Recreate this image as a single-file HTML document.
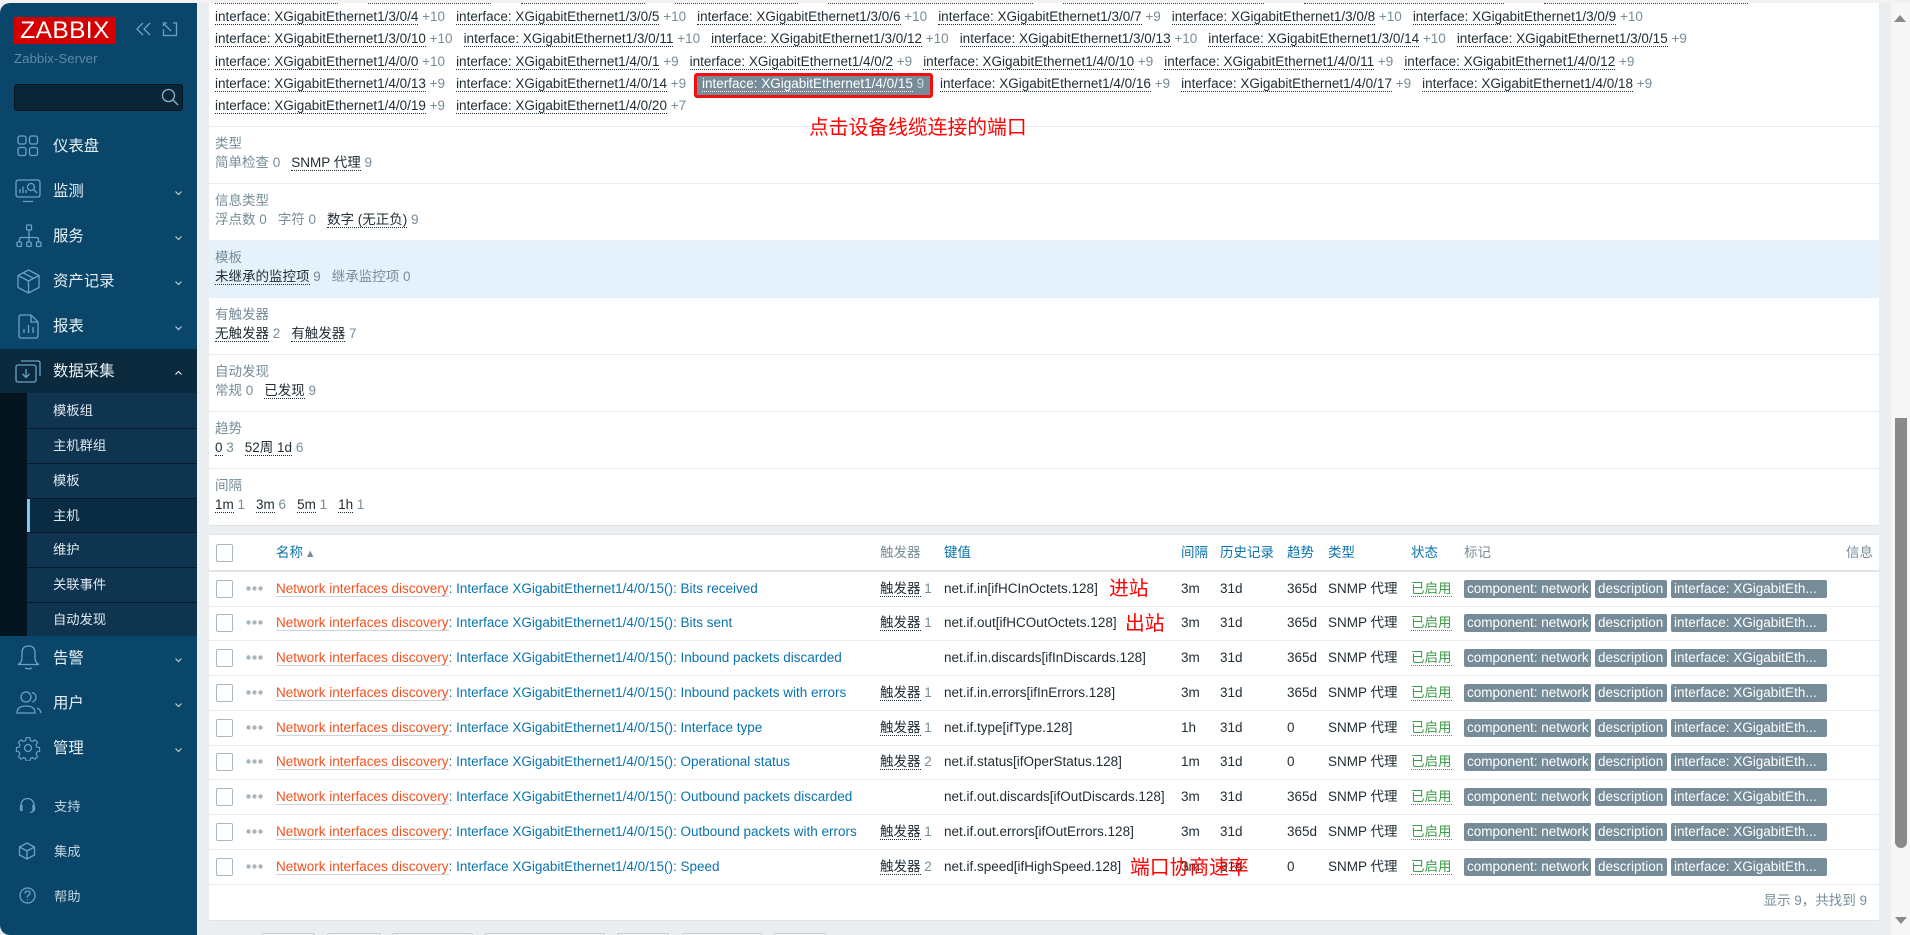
<!DOCTYPE html>
<html lang="zh"><head><meta charset="utf-8"><title>Zabbix</title>
<style>
html,body{margin:0;padding:0;width:1910px;height:935px;overflow:hidden;background:#ebeef0}
body{font:13.5px/16px "Liberation Sans","Noto Sans CJK SC",sans-serif;color:#1f2c33;position:relative}
a{color:inherit;text-decoration:none}
.abs{position:absolute}
#top{position:absolute;left:0;top:0;width:1910px;height:3px;background:#f2f2f2}
#side{position:absolute;left:0;top:3px;width:197px;height:932px;background:#0a466a;border-radius:10px 0 0 10px;overflow:hidden;color:#e4edf2}
#side .m{position:absolute;left:53px;font-size:15.4px;line-height:20px;color:#e8f0f4;white-space:nowrap;margin-top:1px}
#side .s{position:absolute;left:53px;font-size:13.3px;line-height:20px;color:#dfe8ee;white-space:nowrap;margin-top:1px}
#side .b{position:absolute;left:54px;font-size:13.3px;line-height:20px;color:#c0d2dd;white-space:nowrap;margin-top:1px}
#side svg{position:absolute;fill:none;stroke:#6aa2c6;stroke-width:1.3}
#side svg.c{stroke:#b9ccd8;stroke-width:1.6;left:174px;width:9px;height:6px;margin-top:-1px}
.panel{position:absolute;left:209px;width:1670px;background:#fff}
.tl{position:absolute;left:215px;white-space:nowrap;line-height:18px;height:18px}
.tl a,.v a{border-bottom:1px dotted #1f2c33;color:#1f2c33;padding-bottom:0}
.tl i,.v i{font-style:normal;color:#768d99}
.tl span{margin-right:11px}
.lab{position:absolute;left:215px;color:#768d99;line-height:18px;white-space:nowrap;margin-top:1px}
.v{position:absolute;left:215px;line-height:18px;white-space:nowrap;color:#768d99}
.v span{margin-right:11px}
.sep{position:absolute;left:209px;width:1670px;height:1px;background:#ebeef0}
.r{position:absolute;left:209px;width:1670px;height:34px;border-bottom:1px solid #ebeef0;box-sizing:content-box;line-height:33px;white-space:nowrap}
.r>*{position:absolute}
.cb{left:7px;top:8px;width:15px;height:16px;border:1px solid #a8b7c1;border-radius:2px;background:#fff}
.dots{left:37px;top:14px;width:17px;height:5px}
.n{left:67px;color:#0a73ad}
.n a{color:#f4511e;border-bottom:1px solid #cdd5da}
.g{left:671px;color:#768d99}.g a{color:#1f2c33;border-bottom:1px dotted #1f2c33}
.k{left:735px}.iv{left:972px}.h{left:1011px}.tr{left:1078px}.ty{left:1119px}
.st{left:1202px;color:#3d9d47}.st a{border-bottom:1px dotted #3d9d47}
.tag{top:8px;height:18px;line-height:17px;background:#768d99;color:#fff;border-radius:2px;padding:0 3px;box-sizing:border-box;overflow:hidden}
.t1{left:1255px;width:127px}.t2{left:1386px;width:72px}.t3{left:1462px;width:156px}
.hd{position:absolute;top:545px;line-height:16px;white-space:nowrap;color:#0a73ad}
.red{position:absolute;color:#f00;font-size:19.8px;line-height:26px;white-space:nowrap}
.btn{position:absolute;top:933px;height:6px;border:1px solid #c5ced4;border-radius:2px;background:#f4f6f7;box-sizing:border-box}
.d{position:absolute;top:3px;height:1px;border-top:1px dotted #39454c}
</style></head><body>
<div id="top"></div>

<!-- filter panel -->
<div class="panel" style="top:3px;height:522px"></div>
<div class="d" style="left:215px;width:123px"></div><div class="d" style="left:368px;width:123px"></div><div class="d" style="left:521px;width:124px"></div><div class="d" style="left:675px;width:123px"></div><div class="d" style="left:828px;width:205px"></div><div class="d" style="left:1063px;width:201px"></div><div class="d" style="left:1304px;width:200px"></div><div class="d" style="left:1544px;width:204px"></div>
<div class="abs" style="left:209px;top:240px;width:1670px;height:57px;background:#e5f2fc"></div>
<div class="sep" style="top:126px"></div><div class="sep" style="top:183px"></div><div class="sep" style="top:240px"></div><div class="sep" style="top:297px"></div><div class="sep" style="top:354px"></div><div class="sep" style="top:411px"></div><div class="sep" style="top:468px"></div>
<div class="sep" style="top:525px;background:#dfe4e7"></div>

<div class="tl" style="top:8px"><span><a>interface: XGigabitEthernet1/3/0/4</a> <i>+10</i></span><span><a>interface: XGigabitEthernet1/3/0/5</a> <i>+10</i></span><span><a>interface: XGigabitEthernet1/3/0/6</a> <i>+10</i></span><span><a>interface: XGigabitEthernet1/3/0/7</a> <i>+9</i></span><span><a>interface: XGigabitEthernet1/3/0/8</a> <i>+10</i></span><span><a>interface: XGigabitEthernet1/3/0/9</a> <i>+10</i></span></div>
<div class="tl" style="top:30px"><span><a>interface: XGigabitEthernet1/3/0/10</a> <i>+10</i></span><span><a>interface: XGigabitEthernet1/3/0/11</a> <i>+10</i></span><span><a>interface: XGigabitEthernet1/3/0/12</a> <i>+10</i></span><span><a>interface: XGigabitEthernet1/3/0/13</a> <i>+10</i></span><span><a>interface: XGigabitEthernet1/3/0/14</a> <i>+10</i></span><span><a>interface: XGigabitEthernet1/3/0/15</a> <i>+9</i></span></div>
<div class="tl" style="top:53px"><span><a>interface: XGigabitEthernet1/4/0/0</a> <i>+10</i></span><span><a>interface: XGigabitEthernet1/4/0/1</a> <i>+9</i></span><span><a>interface: XGigabitEthernet1/4/0/2</a> <i>+9</i></span><span><a>interface: XGigabitEthernet1/4/0/10</a> <i>+9</i></span><span><a>interface: XGigabitEthernet1/4/0/11</a> <i>+9</i></span><span><a>interface: XGigabitEthernet1/4/0/12</a> <i>+9</i></span></div>
<div class="tl" style="top:75px"><span><a>interface: XGigabitEthernet1/4/0/13</a> <i>+9</i></span><span><a>interface: XGigabitEthernet1/4/0/14</a> <i>+9</i></span></div>
<div class="abs" style="left:694px;top:73px;width:239px;height:25px;border:3px solid #f01010;border-radius:3px;box-sizing:border-box;background:#fff"></div>
<div class="abs" style="left:697px;top:76px;width:233px;height:19px;background:#768d99"></div>
<div class="tl" style="top:75px;left:702px;color:#fff"><a style="color:#fff;border-bottom:1px dotted #fff">interface: XGigabitEthernet1/4/0/15</a> <i style="color:#cfd8dd">9</i></div>
<div class="tl" style="top:75px;left:940px"><span><a>interface: XGigabitEthernet1/4/0/16</a> <i>+9</i></span><span><a>interface: XGigabitEthernet1/4/0/17</a> <i>+9</i></span><span><a>interface: XGigabitEthernet1/4/0/18</a> <i>+9</i></span></div>
<div class="tl" style="top:97px"><span><a>interface: XGigabitEthernet1/4/0/19</a> <i>+9</i></span><span><a>interface: XGigabitEthernet1/4/0/20</a> <i>+7</i></span></div>
<div class="red" style="left:809px;top:115px">点击设备线缆连接的端口</div>

<div class="lab" style="top:134px">类型</div>
<div class="v" style="top:154px"><span>简单检查 0</span><span><a>SNMP 代理</a> 9</span></div>
<div class="lab" style="top:191px">信息类型</div>
<div class="v" style="top:211px"><span>浮点数 0</span><span>字符 0</span><span><a>数字 (无正负)</a> 9</span></div>
<div class="lab" style="top:248px">模板</div>
<div class="v" style="top:268px"><span><a>未继承的监控项</a> 9</span><span>继承监控项 0</span></div>
<div class="lab" style="top:305px">有触发器</div>
<div class="v" style="top:325px"><span><a>无触发器</a> 2</span><span><a>有触发器</a> 7</span></div>
<div class="lab" style="top:362px">自动发现</div>
<div class="v" style="top:382px"><span>常规 0</span><span><a>已发现</a> 9</span></div>
<div class="lab" style="top:419px">趋势</div>
<div class="v" style="top:439px"><span><a>0</a> 3</span><span><a>52周 1d</a> 6</span></div>
<div class="lab" style="top:476px">间隔</div>
<div class="v" style="top:496px"><span><a>1m</a> 1</span><span><a>3m</a> 6</span><span><a>5m</a> 1</span><span><a>1h</a> 1</span></div>

<!-- table panel -->
<div class="panel" style="top:535px;height:385px"></div>
<div class="sep" style="top:534px;background:#e2e6e9"></div>
<div class="sep" style="top:920px;background:#dfe4e7"></div>
<div class="abs" style="left:209px;top:570px;width:1670px;height:2px;background:#dfe4e7"></div>
<div class="abs" style="left:216px;top:544px;width:15px;height:16px;border:1px solid #a8b7c1;border-radius:2px"></div>
<div class="hd" style="left:276px">名称 <span style="font-size:11px;color:#768d99;margin-left:-2px">▲</span></div>
<div class="hd" style="left:880px;color:#768d99">触发器</div>
<div class="hd" style="left:944px">键值</div>
<div class="hd" style="left:1181px">间隔</div>
<div class="hd" style="left:1220px">历史记录</div>
<div class="hd" style="left:1287px">趋势</div>
<div class="hd" style="left:1328px">类型</div>
<div class="hd" style="left:1411px">状态</div>
<div class="hd" style="left:1464px;color:#768d99">标记</div>
<div class="hd" style="left:1846px;color:#768d99">信息</div>

<div class="r" style="top:572px"><div class="cb"></div><svg class="dots" viewBox="0 0 17 5"><g fill="#a9b5bd"><circle cx="2.5" cy="2.5" r="2.2"/><circle cx="8.5" cy="2.5" r="2.2"/><circle cx="14.5" cy="2.5" r="2.2"/></g></svg><div class="n"><a>Network interfaces discovery</a>: Interface XGigabitEthernet1/4/0/15(): Bits received</div><div class="g"><a>触发器</a> 1</div><div class="k">net.if.in[ifHCInOctets.128]</div><div class="iv">3m</div><div class="h">31d</div><div class="tr">365d</div><div class="ty">SNMP 代理</div><div class="st"><a>已启用</a></div><div class="tag t1">component: network</div><div class="tag t2">description</div><div class="tag t3">interface: XGigabitEth...</div></div>
<div class="r" style="top:606px"><div class="cb"></div><svg class="dots" viewBox="0 0 17 5"><g fill="#a9b5bd"><circle cx="2.5" cy="2.5" r="2.2"/><circle cx="8.5" cy="2.5" r="2.2"/><circle cx="14.5" cy="2.5" r="2.2"/></g></svg><div class="n"><a>Network interfaces discovery</a>: Interface XGigabitEthernet1/4/0/15(): Bits sent</div><div class="g"><a>触发器</a> 1</div><div class="k">net.if.out[ifHCOutOctets.128]</div><div class="iv">3m</div><div class="h">31d</div><div class="tr">365d</div><div class="ty">SNMP 代理</div><div class="st"><a>已启用</a></div><div class="tag t1">component: network</div><div class="tag t2">description</div><div class="tag t3">interface: XGigabitEth...</div></div>
<div class="r" style="top:641px"><div class="cb"></div><svg class="dots" viewBox="0 0 17 5"><g fill="#a9b5bd"><circle cx="2.5" cy="2.5" r="2.2"/><circle cx="8.5" cy="2.5" r="2.2"/><circle cx="14.5" cy="2.5" r="2.2"/></g></svg><div class="n"><a>Network interfaces discovery</a>: Interface XGigabitEthernet1/4/0/15(): Inbound packets discarded</div><div class="k">net.if.in.discards[ifInDiscards.128]</div><div class="iv">3m</div><div class="h">31d</div><div class="tr">365d</div><div class="ty">SNMP 代理</div><div class="st"><a>已启用</a></div><div class="tag t1">component: network</div><div class="tag t2">description</div><div class="tag t3">interface: XGigabitEth...</div></div>
<div class="r" style="top:676px"><div class="cb"></div><svg class="dots" viewBox="0 0 17 5"><g fill="#a9b5bd"><circle cx="2.5" cy="2.5" r="2.2"/><circle cx="8.5" cy="2.5" r="2.2"/><circle cx="14.5" cy="2.5" r="2.2"/></g></svg><div class="n"><a>Network interfaces discovery</a>: Interface XGigabitEthernet1/4/0/15(): Inbound packets with errors</div><div class="g"><a>触发器</a> 1</div><div class="k">net.if.in.errors[ifInErrors.128]</div><div class="iv">3m</div><div class="h">31d</div><div class="tr">365d</div><div class="ty">SNMP 代理</div><div class="st"><a>已启用</a></div><div class="tag t1">component: network</div><div class="tag t2">description</div><div class="tag t3">interface: XGigabitEth...</div></div>
<div class="r" style="top:711px"><div class="cb"></div><svg class="dots" viewBox="0 0 17 5"><g fill="#a9b5bd"><circle cx="2.5" cy="2.5" r="2.2"/><circle cx="8.5" cy="2.5" r="2.2"/><circle cx="14.5" cy="2.5" r="2.2"/></g></svg><div class="n"><a>Network interfaces discovery</a>: Interface XGigabitEthernet1/4/0/15(): Interface type</div><div class="g"><a>触发器</a> 1</div><div class="k">net.if.type[ifType.128]</div><div class="iv">1h</div><div class="h">31d</div><div class="tr">0</div><div class="ty">SNMP 代理</div><div class="st"><a>已启用</a></div><div class="tag t1">component: network</div><div class="tag t2">description</div><div class="tag t3">interface: XGigabitEth...</div></div>
<div class="r" style="top:745px"><div class="cb"></div><svg class="dots" viewBox="0 0 17 5"><g fill="#a9b5bd"><circle cx="2.5" cy="2.5" r="2.2"/><circle cx="8.5" cy="2.5" r="2.2"/><circle cx="14.5" cy="2.5" r="2.2"/></g></svg><div class="n"><a>Network interfaces discovery</a>: Interface XGigabitEthernet1/4/0/15(): Operational status</div><div class="g"><a>触发器</a> 2</div><div class="k">net.if.status[ifOperStatus.128]</div><div class="iv">1m</div><div class="h">31d</div><div class="tr">0</div><div class="ty">SNMP 代理</div><div class="st"><a>已启用</a></div><div class="tag t1">component: network</div><div class="tag t2">description</div><div class="tag t3">interface: XGigabitEth...</div></div>
<div class="r" style="top:780px"><div class="cb"></div><svg class="dots" viewBox="0 0 17 5"><g fill="#a9b5bd"><circle cx="2.5" cy="2.5" r="2.2"/><circle cx="8.5" cy="2.5" r="2.2"/><circle cx="14.5" cy="2.5" r="2.2"/></g></svg><div class="n"><a>Network interfaces discovery</a>: Interface XGigabitEthernet1/4/0/15(): Outbound packets discarded</div><div class="k">net.if.out.discards[ifOutDiscards.128]</div><div class="iv">3m</div><div class="h">31d</div><div class="tr">365d</div><div class="ty">SNMP 代理</div><div class="st"><a>已启用</a></div><div class="tag t1">component: network</div><div class="tag t2">description</div><div class="tag t3">interface: XGigabitEth...</div></div>
<div class="r" style="top:815px"><div class="cb"></div><svg class="dots" viewBox="0 0 17 5"><g fill="#a9b5bd"><circle cx="2.5" cy="2.5" r="2.2"/><circle cx="8.5" cy="2.5" r="2.2"/><circle cx="14.5" cy="2.5" r="2.2"/></g></svg><div class="n"><a>Network interfaces discovery</a>: Interface XGigabitEthernet1/4/0/15(): Outbound packets with errors</div><div class="g"><a>触发器</a> 1</div><div class="k">net.if.out.errors[ifOutErrors.128]</div><div class="iv">3m</div><div class="h">31d</div><div class="tr">365d</div><div class="ty">SNMP 代理</div><div class="st"><a>已启用</a></div><div class="tag t1">component: network</div><div class="tag t2">description</div><div class="tag t3">interface: XGigabitEth...</div></div>
<div class="r" style="top:850px"><div class="cb"></div><svg class="dots" viewBox="0 0 17 5"><g fill="#a9b5bd"><circle cx="2.5" cy="2.5" r="2.2"/><circle cx="8.5" cy="2.5" r="2.2"/><circle cx="14.5" cy="2.5" r="2.2"/></g></svg><div class="n"><a>Network interfaces discovery</a>: Interface XGigabitEthernet1/4/0/15(): Speed</div><div class="g"><a>触发器</a> 2</div><div class="k">net.if.speed[ifHighSpeed.128]</div><div class="iv">3m</div><div class="h">31d</div><div class="tr">0</div><div class="ty">SNMP 代理</div><div class="st"><a>已启用</a></div><div class="tag t1">component: network</div><div class="tag t2">description</div><div class="tag t3">interface: XGigabitEth...</div></div>

<div class="red" style="left:1109px;top:576px">进站</div>
<div class="red" style="left:1125px;top:611px">出站</div>
<div class="red" style="left:1130px;top:855px">端口协商速率</div>
<div class="abs" style="right:43px;top:893px;color:#768d99;white-space:nowrap">显示 9，共找到 9</div>

<div class="btn" style="left:262px;width:53px"></div><div class="btn" style="left:327px;width:54px"></div><div class="btn" style="left:392px;width:81px"></div><div class="btn" style="left:484px;width:121px"></div><div class="btn" style="left:617px;width:52px"></div><div class="btn" style="left:682px;width:80px"></div><div class="btn" style="left:774px;width:52px"></div>

<!-- scrollbar -->
<div class="abs" style="left:1891px;top:3px;width:19px;height:932px;background:#f7f7f7"></div>
<div class="abs" style="left:1895px;top:418px;width:12px;height:430px;background:#8a8a8a;border-radius:0 0 6px 6px"></div>
<svg class="abs" style="left:1894px;top:14px" width="12" height="9" viewBox="0 0 12 9"><path d="M6 1L12 8H0z" fill="#8a8a8a"/></svg>
<svg class="abs" style="left:1895px;top:916px" width="12" height="9" viewBox="0 0 12 9"><path d="M0 1H12L6 8z" fill="#8a8a8a"/></svg>

<!-- sidebar -->
<div id="side">
<div class="abs" style="left:14px;top:14px;width:102px;height:27px;background:#d40000;color:#fff;font-size:24.5px;line-height:28px;text-align:center;letter-spacing:.4px">ZABBIX</div>
<svg style="left:135px;top:19px" width="17" height="14" viewBox="0 0 17 14"><path d="M8 1L2 7l6 6M15 1L9 7l6 6"/></svg>
<svg style="left:162px;top:19px" width="16" height="15" viewBox="0 0 16 15"><path d="M5 1H1.5v3M1.5 1.5L9 9M11 1h3.5v12.5H1.500V7.500"/></svg>
<div class="abs" style="left:14px;top:48px;font-size:13.3px;line-height:16px;color:#5f8aa5">Zabbix-Server</div>
<div class="abs" style="left:14px;top:81px;width:169px;height:27px;background:#0a2535;border:1px solid #05151f;border-radius:3px;box-sizing:border-box"></div>
<svg style="left:161px;top:85px;stroke:#8fb4cb" width="18" height="18" viewBox="0 0 18 18"><circle cx="7.500" cy="7.500" r="6"/><path d="M12 12l5 5"/></svg>

<!-- dashboard -->
<svg style="left:17px;top:132px" width="22" height="22" viewBox="0 0 22 22"><rect x="1" y="1" width="8" height="8" rx="2"/><rect x="12.500" y="1" width="8" height="8" rx="2"/><rect x="1" y="12.500" width="8" height="8" rx="2"/><rect x="12.500" y="12.500" width="8" height="8" rx="2"/></svg>
<div class="m" style="top:133px">仪表盘</div>
<!-- monitoring -->
<svg style="left:15px;top:176px" width="26" height="24" viewBox="0 0 26 24"><path d="M9 18H3.500Q1 18 1 15.500V3.500Q1 1 3.500 1H22.500Q25 1 25 3.500V15.500Q25 18 22.500 18H9M8 22.500H18M5 14V10M8 14V7.500M11 14V11"/><circle cx="16" cy="8" r="3.500"/><path d="M18.500 10.500L22 14"/></svg>
<div class="m" style="top:178px">监测</div><svg class="c" style="top:188px" viewBox="0 0 12 8"><path d="M2 2l4 4 4-4"/></svg>
<!-- services -->
<svg style="left:16px;top:221px" width="26" height="24" viewBox="0 0 26 24"><rect x="10.500" y="1" width="5" height="5" rx="1"/><path d="M13 6v7M3.500 18v-2.500q0-2 2-2h15q2 0 2 2V18M13 13v5"/><rect x="1" y="18" width="4.500" height="4.500" rx="1"/><rect x="10.700" y="18" width="4.500" height="4.500" rx="1"/><rect x="20.500" y="18" width="4.500" height="4.500" rx="1"/></svg>
<div class="m" style="top:223px">服务</div><svg class="c" style="top:233px" viewBox="0 0 12 8"><path d="M2 2l4 4 4-4"/></svg>
<!-- inventory -->
<svg style="left:17px;top:266px" width="23" height="25" viewBox="0 0 23 25"><path d="M11.500 1L22 6.500v12L11.500 24 1 18.500v-12zM1 6.500l10.500 5.500L22 6.500M11.500 12v12M6 3.800l10.500 5.500"/></svg>
<div class="m" style="top:268px">资产记录</div><svg class="c" style="top:278px" viewBox="0 0 12 8"><path d="M2 2l4 4 4-4"/></svg>
<!-- reports -->
<svg style="left:18px;top:311px" width="21" height="25" viewBox="0 0 21 25"><path d="M3 1H13L20 8V21.500Q20 24 17.500 24H3.500Q1 24 1 21.500V3Q1 1 3 1ZM13 1V8H20M6 19v-4M10.500 19v-8M15 19v-6"/></svg>
<div class="m" style="top:313px">报表</div><svg class="c" style="top:323px" viewBox="0 0 12 8"><path d="M2 2l4 4 4-4"/></svg>

<!-- data collection -->
<div class="abs" style="left:0;top:346px;width:197px;height:44px;background:#0b2a3d"></div>
<svg style="left:15px;top:357px" width="26" height="23" viewBox="0 0 26 23"><rect x="1" y="5" width="20" height="17" rx="2"/><path d="M6 1H23q2 0 2 2V16M11 9v8M7.500 14l3.500 3.500 3.500-3.500"/></svg>
<div class="m" style="top:358px">数据采集</div><svg class="c" style="top:368px;stroke:#e0e8ee" viewBox="0 0 12 8"><path d="M2 6l4-4 4 4"/></svg>

<div class="abs" style="left:0;top:390px;width:27px;height:243px;background:#04141e"></div>
<div class="abs" style="left:27px;top:390px;width:170px;height:243px;background:#0f3450"></div>
<div class="abs" style="left:27px;top:496px;width:170px;height:33px;background:#0a2c42"></div>
<div class="abs" style="left:27px;top:496px;width:3px;height:33px;background:#7fc9f5"></div>
<div class="abs" style="left:27px;top:425px;width:170px;height:1px;background:#05192a"></div>
<div class="abs" style="left:27px;top:460px;width:170px;height:1px;background:#05192a"></div>
<div class="abs" style="left:27px;top:495px;width:170px;height:1px;background:#05192a"></div>
<div class="abs" style="left:27px;top:529px;width:170px;height:1px;background:#05192a"></div>
<div class="abs" style="left:27px;top:564px;width:170px;height:1px;background:#05192a"></div>
<div class="abs" style="left:27px;top:599px;width:170px;height:1px;background:#05192a"></div>
<div class="s" style="top:397px">模板组</div>
<div class="s" style="top:432px">主机群组</div>
<div class="s" style="top:467px">模板</div>
<div class="s" style="top:502px">主机</div>
<div class="s" style="top:536px">维护</div>
<div class="s" style="top:571px">关联事件</div>
<div class="s" style="top:606px">自动发现</div>

<!-- alerts -->
<svg style="left:17px;top:642px" width="23" height="25" viewBox="0 0 23 25"><path d="M1 19.500Q5 18 5 12V8Q5 1 11.500 1 18 1 18 8v4q0 6 4 7.500zM8 23q3.500 1.800 7 0"/></svg>
<div class="m" style="top:645px">告警</div><svg class="c" style="top:655px" viewBox="0 0 12 8"><path d="M2 2l4 4 4-4"/></svg>
<!-- users -->
<svg style="left:16px;top:688px" width="26" height="24" viewBox="0 0 26 24"><circle cx="10" cy="6" r="5"/><path d="M1 22q0-7 9-7t9 7zM16 1.500q4 1 4 4.500t-3.500 5M21 17q3.500 1.500 4 5"/></svg>
<div class="m" style="top:690px">用户</div><svg class="c" style="top:700px" viewBox="0 0 12 8"><path d="M2 2l4 4 4-4"/></svg>
<!-- admin -->
<svg style="left:15px;top:732px" width="26" height="26" viewBox="0 0 26 26"><circle cx="13" cy="13" r="3.500"/><path d="M11 1.500h4l.7 3.300 2.300 1 2.900-1.800 2.800 2.800-1.800 2.900 1 2.300 3 .7v4l-3 .7-1 2.300 1.800 2.900-2.800 2.800-2.900-1.800-2.300 1-.7 3h-4l-.7-3-2.300-1-2.900 1.800-2.800-2.800 1.800-2.900-1-2.300-3-.7v-4l3-.7 1-2.300-1.800-2.900 2.800-2.800 2.900 1.800 2.300-1z" transform="translate(1.300 1.300) scale(.9)"/></svg>
<div class="m" style="top:735px">管理</div><svg class="c" style="top:745px" viewBox="0 0 12 8"><path d="M2 2l4 4 4-4"/></svg>

<!-- support -->
<svg style="left:19px;top:794px" width="17" height="17" viewBox="0 0 17 17"><path d="M2 10V8a6.500 6.500 0 0 1 13 0v2M15 11v1q0 3-4 3.500M1.500 9.500q0-1 1-1h.5v5h-.5q-1 0-1-1zM15.500 9.500q0-1-1-1H14v5h.5q1 0 1-1z"/></svg>
<div class="b" style="top:793px">支持</div>
<!-- integrations -->
<svg style="left:18px;top:839px" width="18" height="18" viewBox="0 0 18 18"><path d="M9 1l7.500 4v8L9 17l-7.500-4V5zM1.500 5L9 9l7.500-4M9 9v8"/><path d="M4.500 9v.01M13 8.500v.01M9 4.500v.01" stroke-width="1.800"/></svg>
<div class="b" style="top:838px">集成</div>
<!-- help -->
<svg style="left:19px;top:884px" width="17" height="17" viewBox="0 0 17 17"><circle cx="8.500" cy="8.500" r="7.500"/><path d="M6 6.500q0-2.500 2.500-2.500T11 6q0 1.500-1.500 2.200T8.500 10.500M8.500 12.500v1"/></svg>
<div class="b" style="top:883px">帮助</div>
</div>
</body></html>
